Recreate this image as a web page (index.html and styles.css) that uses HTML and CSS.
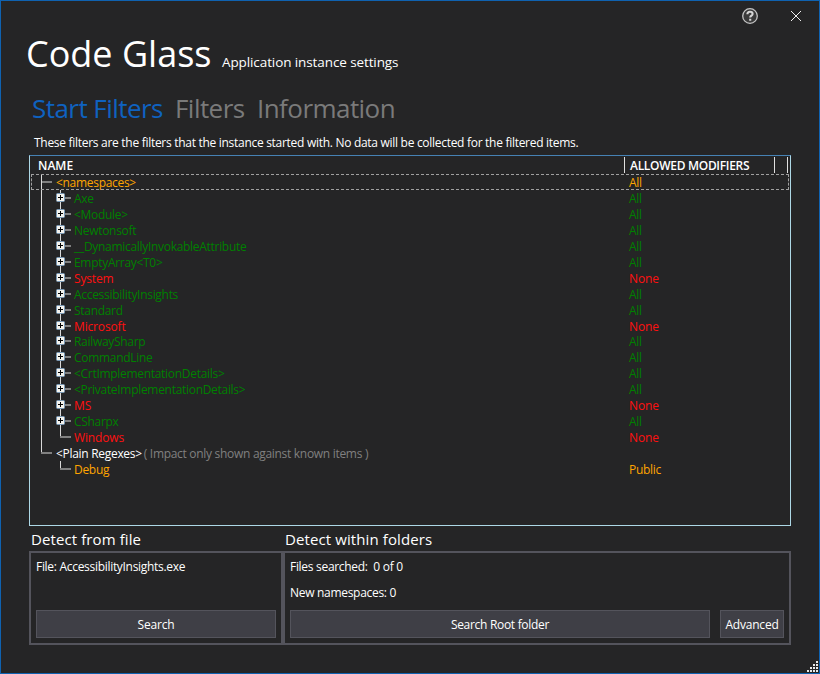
FILE: index.html
```html
<!DOCTYPE html>
<html lang="en">
<head>
<meta charset="utf-8">
<title>Code Glass</title>
<link rel="stylesheet" href="styles.css">
</head>
<body>
<div class="window">
  <div class="caption">
    <svg class="help" width="18" height="18" viewBox="0 0 18 18"><circle cx="9" cy="9" r="7.3" fill="#3a3a3a" stroke="#c4c4c4" stroke-width="1.3"/><path d="M6.4 7.2C6.4 5.5 7.5 4.7 9 4.7s2.6.8 2.6 2.2c0 1.8-2.4 1.7-2.4 3.7M9.2 11.8v2" fill="none" stroke="#d6d6d6" stroke-width="2.1"/></svg>
    <svg class="close" width="12" height="12" viewBox="0 0 12 12"><path d="M1 1l10 10M11 1L1 11" stroke="#f0f0f0" stroke-width="1" fill="none"/></svg>
  </div>
  <header class="title"><h1>Code Glass</h1><span class="subtitle">Application instance settings</span></header>
  <nav class="tabs"><a class="tab active">Start Filters</a><a class="tab filters">Filters</a><a class="tab info">Information</a></nav>
  <p class="hint">These filters are the filters that the instance started with. No data will be collected for the filtered items.</p>
  <section class="tree">
    <div class="head"><span class="name">NAME</span><span class="mods">ALLOWED MODIFIERS</span><span class="rest"></span></div>
    <div class="rows" id="rows"></div>
  </section>
  <div class="panels">
    <section class="group file">
      <h2>Detect from file</h2>
      <div class="box"><p class="line exe">File: AccessibilityInsights.exe</p><div class="actions"><button class="wide search">Search</button></div></div>
    </section>
    <section class="group folders">
      <h2>Detect within folders</h2>
      <div class="box"><p class="line">Files searched:&nbsp; 0 of 0</p><p class="line second">New namespaces: 0</p><div class="actions"><button class="wide root">Search Root folder</button><button class="adv">Advanced</button></div></div>
    </section>
  </div>
  <svg class="grip" width="12" height="12" viewBox="0 0 12 12" fill="#e8e8e8"><path d="M9 0h2v2h-2zM6 3h2v2h-2zM9 3h2v2h-2zM3 6h2v2h-2zM6 6h2v2h-2zM9 6h2v2h-2zM0 9h2v2h-2zM3 9h2v2h-2zM6 9h2v2h-2zM9 9h2v2h-2z"/></svg>
</div>
<script src="tree.js"></script>
</body>
</html>
```
FILE: styles.css
```css
* { box-sizing: border-box; }
body { margin: 0; background: #252525; color: #fff; font: 12px/16px "Open Sans", "Noto Sans", sans-serif; }
h1, h2, p { margin: 0; font-weight: 400; }
.window { position: relative; width: 820px; height: 674px; border: 1px solid #0f62b0; background: #252526; padding: 0 28px; overflow: hidden; }
.caption { display: flex; justify-content: flex-end; align-items: center; height: 30px; margin-right: -12px; gap: 31px; }
.caption .close { margin-right: 1px; }
.title { display: flex; align-items: baseline; height: 61px; margin-left: -3px; line-height: 46px; }
.title h1 { font-size: 36px; width: 196px; white-space: nowrap; }
.subtitle { font-size: 13.5px; letter-spacing: -0.1px; white-space: nowrap; }
.tabs { display: flex; height: 43px; margin-left: 3px; font-size: 26px; line-height: 32px; color: #7a7a7a; white-space: nowrap; }
.tab { width: 143px; letter-spacing: -0.55px; }
.tab.active { color: #0f62c0; }
.tab.filters { width: 82px; }
.hint { height: 20px; padding-left: 5px; letter-spacing: -0.29px; white-space: nowrap; }
.tree { width: 762px; height: 371px; border: 1px solid #add8e6; border-top-color: #4682b4; }
.head { display: flex; height: 18px; padding-top: 1px; font-weight: 600; line-height: 17px; }
.head span { height: 16px; border-right: 1px solid #e0e0e0; }
.head .name { width: 595px; padding-left: 8px; }
.head .mods { width: 150px; padding-left: 5px; letter-spacing: -0.3px; white-space: nowrap; }
.head .rest { width: 13px; }
.rows { margin-top: -0.06px; letter-spacing: -0.3px; }
.row { display: flex; width: 758px; height: 15.96px; margin-left: 1px; }
.row.focus { outline: 1px dashed #a0a0a0; outline-offset: -1px; }
.row .cell { width: 597px; display: flex; white-space: nowrap; }
.branches { flex: none; height: 16px; }
.label, .note, .row .mod { line-height: 17px; }
.label, .row .mod { padding-left: 1px; }
.all { color: #008000; }
.none { color: #ff1010; letter-spacing: -0.15px; }
.part { color: #ffa500; }
.note { color: #808080; margin-left: 2px; }
.panels { display: flex; height: 119px; padding-top: 2px; }
.group.file { width: 254px; }
.group.folders { width: 508px; }
.group h2 { height: 23px; padding-left: 2px; font-size: 15px; line-height: 22px; letter-spacing: 0.1px; white-space: nowrap; }
.box { height: 94px; border: 2px solid #54545c; padding: 5px; display: flex; flex-direction: column; }
.line { height: 26px; line-height: 18px; white-space: nowrap; letter-spacing: -0.3px; }
.actions { display: flex; gap: 10px; margin-top: auto; }
button { height: 28px; padding: 1px 0 0; border: 1px solid #54545c; background: #3f3f46; color: #fff; font: inherit; letter-spacing: -0.3px; }
.search, .adv { letter-spacing: -0.2px; }
.wide { flex: 1; }
.adv { width: 64px; }
.grip { position: absolute; right: 0; bottom: 0; }
```
FILE: tree.js
```js
const items = [
  ["<namespaces>", "All", "part", 0],
  ["Axe", "All", "all"], ["<Module>", "All", "all"], ["Newtonsoft", "All", "all"],
  ["__DynamicallyInvokableAttribute", "All", "all"], ["EmptyArray<T0>", "All", "all"],
  ["System", "None", "none"], ["AccessibilityInsights", "All", "all"], ["Standard", "All", "all"],
  ["Microsoft", "None", "none"], ["RailwaySharp", "All", "all"], ["CommandLine", "All", "all"],
  ["<CrtImplementationDetails>", "All", "all"], ["<PrivateImplementationDetails>", "All", "all"],
  ["MS", "None", "none"], ["CSharpx", "All", "all"], ["Windows", "None", "none", 2],
  ["<Plain Regexes>", "", "", 3], ["Debug", "Public", "part", 4]
];
const rect = (x, y, w, h, c) => `<rect x="${x}" y="${y}" width="${w}" height="${h}" fill="${c}"/>`;
const white = "#d8d8d8", gray = "#808080";
const plus = '<rect x="25.5" y="3.5" width="8" height="8" rx="1" fill="#f4f3ee" stroke="#7898b5"/><path d="M27 7.5h5M29.5 5v5" stroke="#000"/>';
function branches(kind) {
  let s = "";
  if (kind === 0) s = rect(10, 0, 1, 16, white) + rect(11, 7, 10, 2, gray);
  else if (kind === 3) s = rect(10, 0, 1, 8, white) + rect(10, 7, 11, 2, gray);
  else {
    if (kind !== 4) s += rect(10, 0, 1, 16, white);
    s += rect(29, 0, 1, kind ? 8 : 16, white) + rect(kind ? 29 : 34, 7, kind ? 11 : 6, 2, gray);
    if (!kind) s += plus;
  }
  const w = kind === 0 || kind === 3 ? 24 : 42;
  return `<svg class="branches" width="${w}" height="16" viewBox="0 0 ${w} 16">${s}</svg>`;
}
const esc = t => t.replace(/</g, "&lt;").replace(/>/g, "&gt;");
document.getElementById("rows").innerHTML = items.map(([name, mod, color, kind], i) =>
  `<div class="row${i ? "" : " focus"}"><div class="cell">${branches(kind)}<span class="label ${color}">${esc(name)}</span>` +
  (kind === 3 ? '<span class="note">( Impact only shown against known items )</span>' : "") +
  `</div><span class="mod ${color}">${mod}</span></div>`).join("");
```
